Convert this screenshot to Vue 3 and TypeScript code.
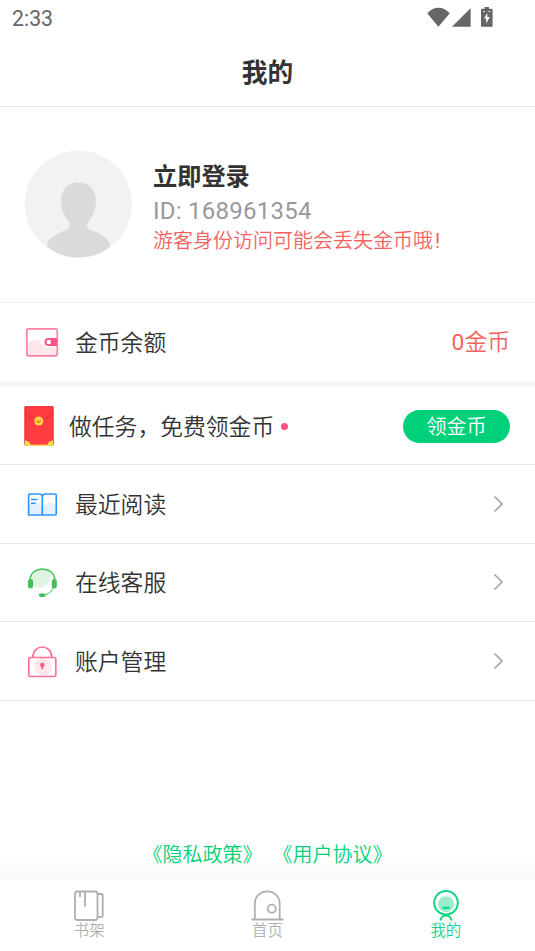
<script setup lang="ts">
interface MenuItem {
  id: 'book' | 'headset' | 'lock'
  label: string
}

interface TabItem {
  id: 'shelf' | 'home' | 'mine'
  label: string
}

const menu: MenuItem[] = [
  { id: 'book', label: '最近阅读' },
  { id: 'headset', label: '在线客服' },
  { id: 'lock', label: '账户管理' },
]

const tabs: TabItem[] = [
  { id: 'shelf', label: '书架' },
  { id: 'home', label: '首页' },
  { id: 'mine', label: '我的' },
]

const activeTab: TabItem['id'] = 'mine'
</script>

<template>
  <div class="screen">
    <header class="status">
      <span class="clock">2:33</span>
      <svg class="indicators" width="70" height="24" viewBox="0 0 70 24" fill="#666">
        <path d="M1.2 8.200 Q12.400 -2.500 23.800 8.200 L12.400 21.800 Z" />
        <path d="M44.600 3.200 V21.800 H26 Z" />
        <path d="M58.500 2h4.500v1.800h2.600q1 0 1 1V20.800q0 1-1 1H56q-1 0-1-1V4.800q0-1 1-1h2.500z" />
        <path d="M61.300 8l-3.300 5.500h2.200v5l3.600-6.500h-2.500z" fill="#fff" />
        <path d="M57 6.500h2M62.500 6.500h2" stroke="#ddd" />
      </svg>
    </header>

    <h1 class="title">我的</h1>

    <section class="profile">
      <svg class="avatar" width="108" height="108" viewBox="0 0 108 108">
        <circle cx="54.300" cy="54" r="53.500" fill="#f2f2f2" />
        <path
          d="M54.500 32.500c11 0 17.500 8 17.500 18 0 10-4 16.500-7.500 21-2.500 4-2 6.500 2.500 8.500 9 3.500 17.500 8 19 14.500 .3 1.500 .3 2-.5 2.500q-13 10.500-31 10.500t-31-10.500c-.8-.5-.8-1-.5-2.500 1.500-6.500 10-11 19-14.500 4.500-2 5-4.500 2.500-8.500-3.500-4.500-7.500-11-7.500-21 0-10 6.500-18 17-18z"
          fill="#dadada"
        />
      </svg>
      <div class="identity">
        <strong class="login">立即登录</strong>
        <span class="uid">ID: 168961354</span>
        <span class="warning">游客身份访问可能会丢失金币哦<span class="mark">!</span></span>
      </div>
    </section>

    <section class="row balance">
      <svg class="icon" width="34" height="32" viewBox="0 0 34 32">
        <path d="M2 29V21a8 8 0 0 1 15-3q3 5 7 3 6-1 8 4v4z" fill="#ffe6eb" />
        <rect x="1.800" y="2.800" width="30.500" height="27" rx="1.800" fill="none" stroke="#ff80a2" stroke-width="1.700" />
        <path d="M32 12h-8.500a4 4 0 0 0 0 8H32z" fill="#ff5483" />
        <circle cx="23.800" cy="16" r="2.300" fill="#fff" />
      </svg>
      <span class="label">金币余额</span>
      <span class="amount"><span class="latin">0</span>金币</span>
    </section>

    <section class="row task">
      <svg class="packet" width="30" height="42" viewBox="0 0 30 42">
        <rect x=".5" y="1" width="29" height="40" rx="1.200" fill="#ff3c42" />
        <path d="M1 8.500l7.500 5.500M29 8.500l-7.500 5.500" fill="none" stroke="#dc2935" stroke-width="1" />
        <path d="M1 2v37M29 2v37" stroke="#e92e3a" />
        <path d="M1 35.500q5 .5 5.500 4.300h17q.500-3.800 5.500-4.300v5.300H1z" fill="#ffd943" />
        <path d="M3 40.300h24" stroke="#ffef8a" stroke-width=".7" />
        <circle cx="14.800" cy="16" r="4.500" fill="#ffd943" />
        <path d="M12.800 14l.8.7M16.800 14l-.8.700M12.800 16q2 3.300 4 0z" stroke="#dc7630" stroke-width=".8" fill="#f28a36" />
      </svg>
      <span class="label">做任务，免费领金币</span>
      <i class="dot"></i>
      <button class="claim" type="button">领金币</button>
    </section>

    <section v-for="item in menu" :key="item.id" class="row">
      <svg v-if="item.id === 'book'" class="icon" width="34" height="32" viewBox="0 0 34 32">
        <path d="M4 27V16q6-4 11 0 4 4 8-1 5-2 8 3v9z" fill="#e5f1ff" />
        <path
          d="M3.600 27V7.500Q3.600 6 5 6h9.500q2.300 0 2.800 2.600.500-2.600 2.800-2.600H30q1.300 0 1.300 1.300V25.700q0 1.300-1.300 1.300zM17.300 8v19"
          fill="none" stroke="#3395ff" stroke-width="1.700" stroke-linejoin="round"
        />
        <path d="M6 11.500h6.500M6 15.300h4.500" stroke="#3395ff" stroke-width="1.400" />
      </svg>
      <svg v-else-if="item.id === 'headset'" class="icon" width="34" height="32" viewBox="0 0 34 32">
        <path d="M7 11Q15 0 26 7q-.5 13-10 14.500-8 .5-9-5z" fill="#dff4e3" />
        <path d="M5 14.500C5-.8 29.800-.8 29.800 14.500" fill="none" stroke="#54c768" stroke-width="1.800" />
        <path d="M28.500 20q-2 8.500-10.500 9" fill="none" stroke="#8bd999" stroke-width="1.200" />
        <rect x="3" y="13" width="5" height="9.500" rx="2.500" fill="#3fc159" />
        <rect x="26.800" y="13" width="5" height="9.500" rx="2.500" fill="#3fc159" />
        <ellipse cx="17.200" cy="29.200" rx="3.300" ry="1.900" fill="#3fc159" />
      </svg>
      <svg v-else class="icon" width="34" height="34" viewBox="0 0 34 34">
        <circle cx="18" cy="22.500" r="9" fill="#ffe8ec" />
        <path d="M7.800 13.500C8-.5 26.500-.5 26.800 13.500" fill="none" stroke="#ff6f96" stroke-width="1.700" />
        <rect x="3.800" y="13.500" width="27" height="19" rx="1.500" fill="none" stroke="#ff7096" stroke-width="1.700" />
        <circle cx="17.300" cy="21" r="2.200" fill="#ff5483" />
        <path d="M17.300 21v4.300" stroke="#ff5483" stroke-width="1.500" />
      </svg>
      <span class="label">{{ item.label }}</span>
      <svg class="arrow" width="12" height="18" viewBox="0 0 12 18">
        <path d="M1.500 1.500L9 9l-7.500 7.500" fill="none" stroke="#a6a6a6" stroke-width="1.700" />
      </svg>
    </section>

    <div class="links">
      <a>《隐私政策》</a>
      <a>《用户协议》</a>
    </div>

    <nav class="tabs">
      <div v-for="tab in tabs" :key="tab.id" class="tab" :class="{ active: tab.id === activeTab }">
        <svg width="34" height="34" viewBox="0 0 34 34" fill="none" stroke="currentColor" stroke-width="1.800">
          <g v-if="tab.id === 'shelf'">
            <rect x="3" y="3.500" width="22.500" height="28.500" rx="2.500" />
            <path d="M8 3.500v5.500M13 3.500V18.500M25.500 6H29q1.700 0 1.700 1.500v20q0 1.500-1.700 1.500h-3.500" />
          </g>
          <g v-else-if="tab.id === 'home'">
            <path d="M4.800 31.500V16C4.800-.8 29.700-.8 29.700 16v15.500M1.500 31.500h32" />
            <circle cx="21.800" cy="20.700" r="4" />
          </g>
          <g v-else stroke-width="2">
            <circle cx="17" cy="14.700" r="11.800" />
            <circle cx="17" cy="16.200" r="8" fill="#99edc9" stroke="none" />
            <path d="M13.500 19.800h7" stroke-width="2.200" />
            <path d="M11.600 32.500c.4-6.700 10.400-6.700 10.800 0" />
          </g>
        </svg>
        <span>{{ tab.label }}</span>
      </div>
    </nav>
  </div>
</template>

<style>
body {
  margin: 0;
  background: #fff;
}
</style>

<style scoped>
.screen {
  width: 535px;
  height: 951px;
  display: flex;
  flex-direction: column;
  overflow: hidden;
  background: #fff;
  color: #333;
  font-family: Roboto, "Noto Sans CJK SC", sans-serif;
  font-weight: 350;
}

.status {
  height: 37px;
  box-sizing: border-box;
  padding: 5px 39px 0 12px;
  display: flex;
  justify-content: space-between;
  color: #666;
}

.clock {
  font-size: 21.300px;
  line-height: 28px;
  font-weight: 400;
}

.title {
  margin: 0;
  height: 69px;
  border-bottom: 1px solid #e4e4e4;
  text-align: center;
  font-size: 25.700px;
  line-height: 72px;
  font-weight: 700;
}

.profile {
  height: 193px;
  padding: 0 0 2px 24px;
  border-bottom: 1px solid #ededed;
  display: flex;
  align-items: center;
}

.identity {
  margin-left: 21px;
  display: flex;
  flex-direction: column;
}

.login {
  padding-top: 4px;
  font-size: 24.200px;
  line-height: 38px;
  font-weight: 700;
}

.uid {
  font-size: 24px;
  line-height: 30px;
  padding-bottom: 2px;
  letter-spacing: 0.25px;
  font-weight: 400;
  color: #999;
}

.warning {
  font-size: 20px;
  line-height: 26px;
  color: #f4645f;
}

.mark {
  margin-left: 2px;
  font-weight: 400;
}

.row {
  height: 77.500px;
  flex-shrink: 0;
  display: flex;
  align-items: center;
  padding: 0 25px;
  border-bottom: 1px solid #e6e6e6;
}

.balance {
  height: 78px;
  border-bottom: 6px solid #f7f7f7;
}

.task {
  height: 77px;
}

.icon {
  margin-right: 16px;
}

.packet {
  margin: 0 15px 0 -1px;
}

.label {
  padding-top: 4px;
  font-size: 22.800px;
  line-height: 32px;
}

.balance .label {
  padding-top: 3px;
}

.amount {
  margin-left: auto;
  padding-bottom: 3px;
  font-size: 22.800px;
  color: #f4645f;
}

.latin {
  font-weight: 400;
}

.dot {
  width: 7px;
  height: 7px;
  margin-top: 2px;
  margin-left: 7px;
  border-radius: 50%;
  background: #ff5483;
}

.claim {
  width: 107px;
  height: 33px;
  margin-top: 2px;
  margin-left: auto;
  padding: 0;
  border: 0;
  border-radius: 17px;
  background: #00d07a;
  color: #fff;
  font: 350 20px/32px Roboto, "Noto Sans CJK SC", sans-serif;
}

.arrow {
  margin-left: auto;
  margin-right: 5px;
}

.links {
  margin-top: auto;
  height: 52px;
  flex-shrink: 0;
  display: flex;
  justify-content: center;
  gap: 10px;
  background: linear-gradient(#fff 60%, #f8f8f8);
  color: #00d07a;
  font-size: 20px;
  line-height: 54px;
}

.tabs {
  height: 71px;
  flex-shrink: 0;
  display: grid;
  grid-template-columns: repeat(3, 1fr);
}

.tab {
  display: flex;
  flex-direction: column;
  align-items: center;
  padding-top: 8px;
  color: #b0b0b0;
  font-size: 15.400px;
  line-height: 19px;
}

.tab.active {
  color: #13d382;
}
</style>
